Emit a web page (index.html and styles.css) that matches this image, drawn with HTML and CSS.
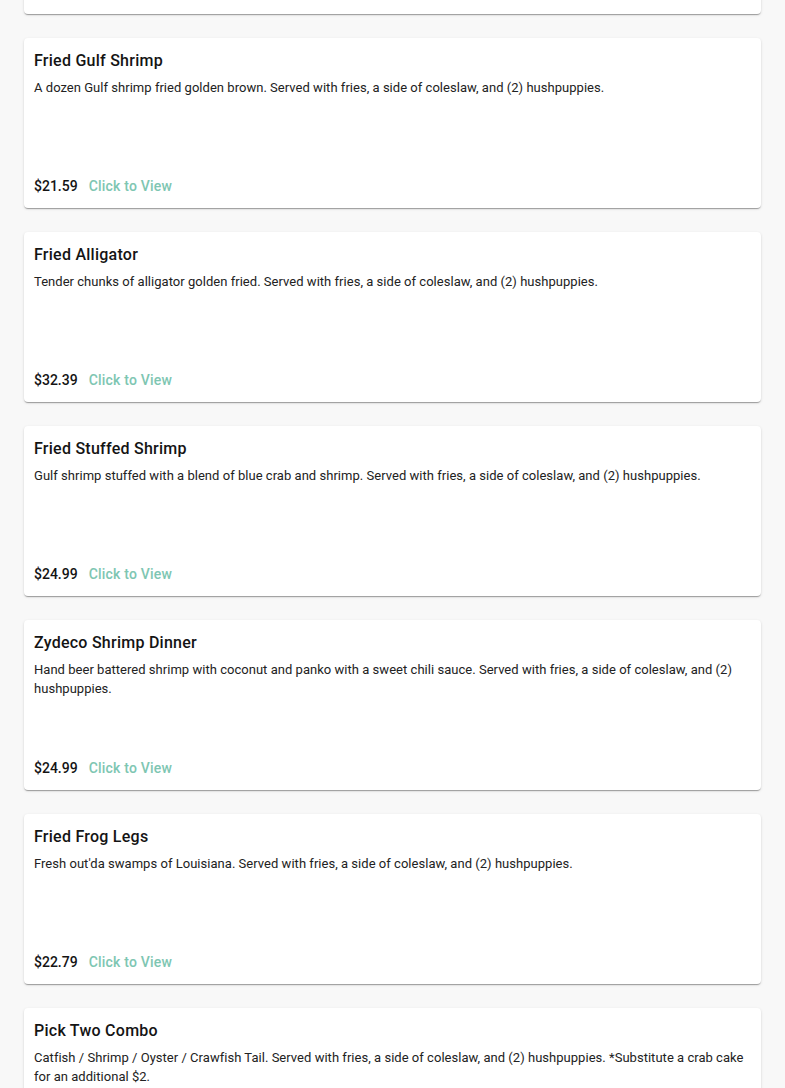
FILE: index.html
```html
<!DOCTYPE html>
<html>
<head>
<meta charset="utf-8">
<link rel="stylesheet" href="styles.css">
</head>
<body>
<div class="list">
  <div class="card">
    <div class="info">
      <div class="title">Fried Catfish</div>
      <div class="desc">Fresh catfish fillets fried golden brown. Served with fries, a side of coleslaw, and (2) hushpuppies.</div>
    </div>
    <div class="foot"><span class="price">$19.99</span><span class="view">Click to View</span></div>
  </div>
  <div class="card">
    <div class="info">
      <div class="title">Fried Gulf Shrimp</div>
      <div class="desc">A dozen Gulf shrimp fried golden brown. Served with fries, a side of coleslaw, and (2) hushpuppies.</div>
    </div>
    <div class="foot"><span class="price">$21.59</span><span class="view">Click to View</span></div>
  </div>
  <div class="card">
    <div class="info">
      <div class="title">Fried Alligator</div>
      <div class="desc">Tender chunks of alligator golden fried. Served with fries, a side of coleslaw, and (2) hushpuppies.</div>
    </div>
    <div class="foot"><span class="price">$32.39</span><span class="view">Click to View</span></div>
  </div>
  <div class="card">
    <div class="info">
      <div class="title">Fried Stuffed Shrimp</div>
      <div class="desc">Gulf shrimp stuffed with a blend of blue crab and shrimp. Served with fries, a side of coleslaw, and (2) hushpuppies.</div>
    </div>
    <div class="foot"><span class="price">$24.99</span><span class="view">Click to View</span></div>
  </div>
  <div class="card">
    <div class="info">
      <div class="title">Zydeco Shrimp Dinner</div>
      <div class="desc">Hand beer battered shrimp with coconut and panko with a sweet chili sauce. Served with fries, a side of coleslaw, and (2) hushpuppies.</div>
    </div>
    <div class="foot"><span class="price">$24.99</span><span class="view">Click to View</span></div>
  </div>
  <div class="card">
    <div class="info">
      <div class="title">Fried Frog Legs</div>
      <div class="desc">Fresh out'da swamps of Louisiana. Served with fries, a side of coleslaw, and (2) hushpuppies.</div>
    </div>
    <div class="foot"><span class="price">$22.79</span><span class="view">Click to View</span></div>
  </div>
  <div class="card">
    <div class="info">
      <div class="title">Pick Two Combo</div>
      <div class="desc">Catfish / Shrimp / Oyster / Crawfish Tail. Served with fries, a side of coleslaw, and (2) hushpuppies. *Substitute a crab cake for an additional $2.</div>
    </div>
    <div class="foot"><span class="price">$26.99</span><span class="view">Click to View</span></div>
  </div>
</div>
</body>
</html>
```
FILE: styles.css
```css
html, body {
  margin: 0;
  padding: 0;
  background: #f8f8f8;
  font-family: Roboto, "Liberation Sans", sans-serif;
  overflow: hidden;
}
.list {
  display: flex;
  flex-direction: column;
  gap: 24px;
  padding: 0 24px;
  margin-top: -156px;
}
.card {
  height: 170px;
  box-sizing: border-box;
  background: #fff;
  border-radius: 4px;
  box-shadow: 0 2px 1px -1px rgba(0,0,0,.2), 0 1px 1px 0 rgba(0,0,0,.14), 0 1px 3px 0 rgba(0,0,0,.12);
  padding: 13px 10px 12px;
  display: flex;
  flex-direction: column;
  justify-content: space-between;
}
.title {
  font-size: 16px;
  line-height: 20px;
  font-weight: 500;
  color: #141414;
  letter-spacing: 0.25px;
}
.desc {
  margin-top: 7px;
  font-size: 13px;
  line-height: 19px;
  color: #222;
  letter-spacing: 0.03px;
}
.foot {
  display: flex;
  align-items: center;
  height: 20px;
  font-size: 14px;
  font-weight: 500;
}
.price {
  color: #141414;
}
.view {
  margin-left: 11px;
  color: #7ec6b2;
  letter-spacing: 0.2px;
}
```
